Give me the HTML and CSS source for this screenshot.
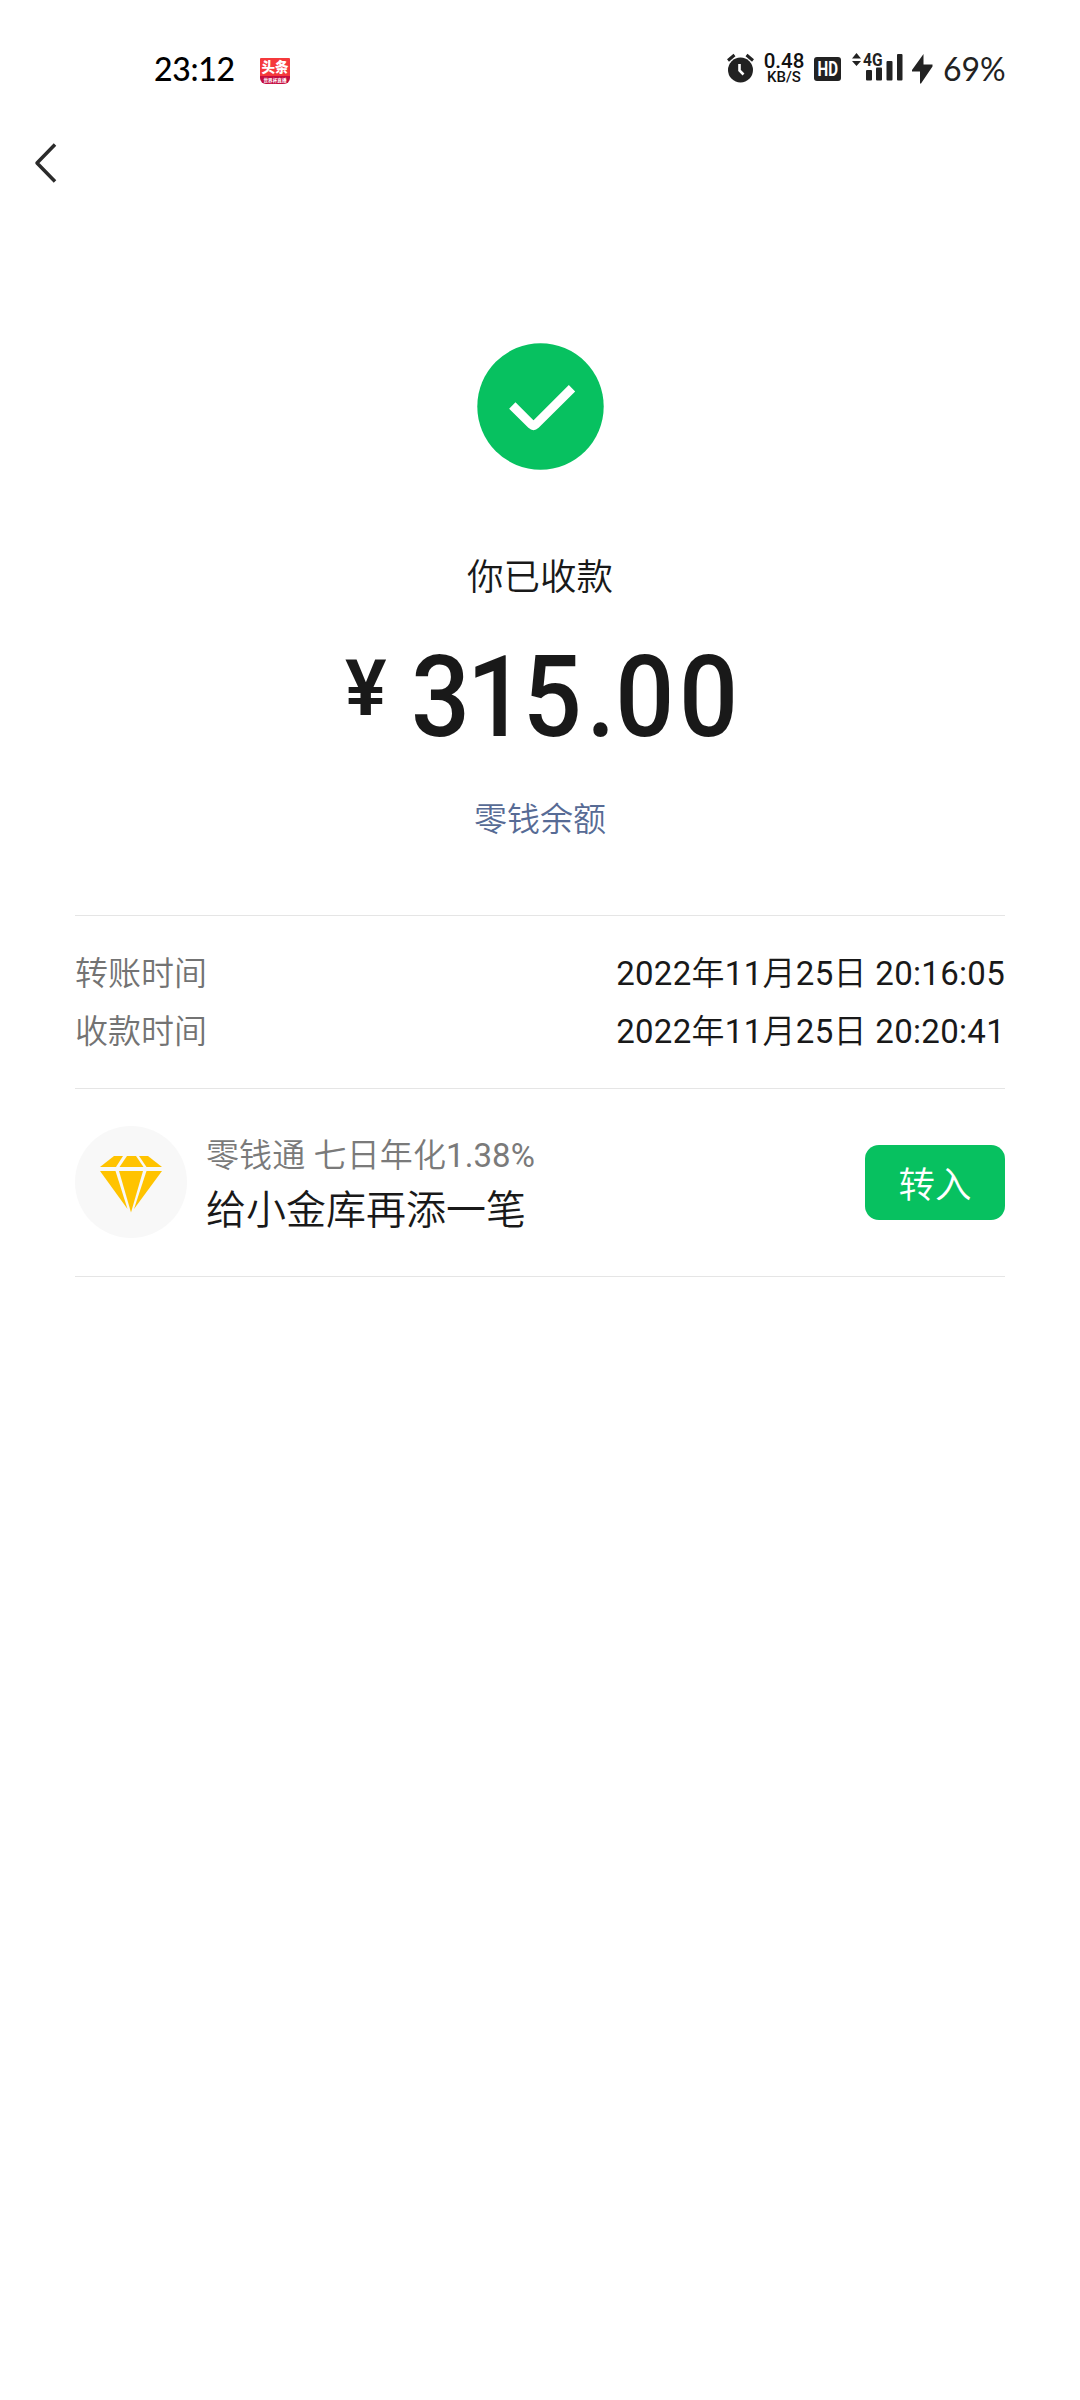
FILE: index.html
```
<!DOCTYPE html>
<html lang="zh-CN">
<head>
  <meta charset="UTF-8">
  <meta name="viewport" content="width=device-width, initial-scale=1.0">
  <title>收款详情</title>
  <link rel="stylesheet" href="styles.css">
</head>
<body>
  <!-- 状态栏 -->
  <header class="status-bar">
    <div class="status-left">
      <span class="clock">23:12</span>
      <div class="app-badge">
        <span class="app-name">头条</span>
        <span class="app-sub">世界杯直播</span>
      </div>
    </div>
    <div class="status-right">
      <svg class="alarm" width="27" height="30" viewBox="0 0 27 30">
        <circle cx="13.5" cy="17" r="12.5" fill="#222"/>
        <path d="M1 7.500L7.500 2M26 7.500L19.500 2" stroke="#222" stroke-width="3" fill="none"/>
        <path d="M12.500 11V17.500L16.500 21.500" stroke="#fff" stroke-width="2.600" fill="none"/>
      </svg>
      <div class="speed">
        <span class="speed-value">0.48</span>
        <span class="speed-unit">KB/S</span>
      </div>
      <svg class="hd" width="27" height="24" viewBox="0 0 27 24">
        <rect width="27" height="24" rx="3" fill="#222"/>
        <text x="3.500" y="19" textLength="20.500" lengthAdjust="spacingAndGlyphs" fill="#fff">HD</text>
      </svg>
      <div class="signal">
        <svg width="51" height="30" viewBox="0 0 51 30">
          <path d="M0 5.500L4.500 0L9 5.500zM0 8L4.500 13L9 8z" fill="#222"/>
          <rect x="14" y="17" width="6" height="10.500" rx="1" fill="#222"/>
          <rect x="24" y="14.500" width="6" height="13" rx="1" fill="#222"/>
          <rect x="34.500" y="8" width="6" height="19.500" rx="1" fill="#222"/>
          <rect x="45" y="1" width="5.500" height="26.500" rx="1" fill="#222"/>
          <text class="network" x="11" y="13" textLength="19.500" lengthAdjust="spacingAndGlyphs">4G</text>
        </svg>
      </div>
      <svg class="bolt" width="21" height="30" viewBox="0 0 21 30">
        <path d="M11.500 0V10.500H20.500V12.500L9 29.500H8V17.500H0V16z" fill="#222"/>
      </svg>
      <span class="battery">69%</span>
    </div>
  </header>

  <nav class="nav">
    <svg width="24" height="42" viewBox="0 0 24 42">
      <path d="M21 2.500L3 21L21 39.500" fill="none" stroke="#2b2b2b" stroke-width="3.500" stroke-linejoin="round"/>
    </svg>
  </nav>

  <main class="content">
    <section class="result">
      <svg class="success" width="127" height="127" viewBox="0 0 127 127">
        <circle cx="63.500" cy="63.500" r="63.200" fill="#07c160"/>
        <path d="M35.300 62.500L54.500 81.600Q56.500 83.500 58.500 81.600L95 45.200" fill="none" stroke="#fff" stroke-width="9"/>
      </svg>
      <p class="result-title">你已收款</p>
      <p class="amount"><span class="currency">¥</span><span class="number"><span class="tight">31</span>5<span class="dot">.</span>00</span></p>
      <a class="balance">零钱余额</a>
    </section>

    <section class="times">
      <div class="time-row">
        <span class="label">转账时间</span>
        <span class="value">2022年11月25日 20:16:05</span>
      </div>
      <div class="time-row">
        <span class="label">收款时间</span>
        <span class="value">2022年11月25日 20:20:41</span>
      </div>
    </section>

    <section class="promo">
      <div class="promo-icon">
        <svg width="64" height="58" viewBox="0 0 64 58">
          <g fill="#ffc300">
            <path d="M15 1H24L17 12H1z"/>
            <path d="M28 1H37L44.500 12H20.500z"/>
            <path d="M40 1H49L63 12H47.500z"/>
            <path d="M1 16H16.500L28.500 54z"/>
            <path d="M20 16H44L32 57.500z"/>
            <path d="M47.500 16H63L35 54z"/>
          </g>
        </svg>
      </div>
      <div class="promo-text">
        <p class="promo-rate">零钱通 七日年化1.38%</p>
        <p class="promo-title">给小金库再添一笔</p>
      </div>
      <button class="promo-btn">转入</button>
    </section>
  </main>
</body>
</html>
```

FILE: styles.css
```
* {
  margin: 0;
  padding: 0;
  box-sizing: border-box;
}

body {
  background-color: #fff;
  color: #191919;
  font-family: Roboto, "Noto Sans CJK SC DemiLight", "Noto Sans CJK SC", sans-serif;
  font-weight: 350;
  min-height: 2400px;
}

svg {
  display: block;
  flex-shrink: 0;
  overflow: visible;
}

/* 状态栏 */
.status-bar {
  display: flex;
  justify-content: space-between;
  height: 100px;
  padding: 53px 75px 0 154px;
  font-family: Lato, "Noto Sans CJK SC", sans-serif;
}

.status-left,
.status-right {
  display: flex;
  align-items: flex-start;
}

.clock {
  width: 106px;
  color: #000;
  font-size: 32px;
  font-weight: 500;
  line-height: 32px;
  letter-spacing: -0.3px;
}

.app-badge {
  display: flex;
  flex-direction: column;
  width: 30px;
  height: 26px;
  margin-top: 5px;
  overflow: hidden;
  border-radius: 1px 1px 6px 6px;
  background: linear-gradient(#f5393c 68%, #c40d3f 68%);
  color: #fff;
  text-align: center;
  white-space: nowrap;
}

.app-name {
  font-size: 13.5px;
  font-weight: 900;
  line-height: 19px;
}

.app-sub {
  font-size: 4.6px;
  font-weight: 700;
  line-height: 6px;
}

.alarm {
  margin-right: 9px;
}

.speed {
  display: flex;
  flex-direction: column;
  width: 42px;
  margin-right: 9px;
  color: #111;
  font-family: Roboto, sans-serif;
  font-weight: 500;
  text-align: center;
}

.speed-value {
  font-size: 20.5px;
  line-height: 16px;
}

.speed-unit {
  font-size: 15px;
  line-height: 17px;
}

.hd {
  margin: 4px 11px 0 0;
  font-family: Roboto, sans-serif;
  font-size: 19.5px;
  font-weight: 700;
}

.signal {
  margin-right: 9px;
}

/* 白色描边压在信号格上 */
.network {
  fill: #222;
  font-family: Roboto, sans-serif;
  font-size: 18px;
  font-weight: 700;
  stroke: #fff;
  stroke-width: 2px;
  paint-order: stroke;
}

.bolt {
  margin: 1px 10px 0 0;
}

.battery {
  width: 62px;
  color: #222;
  font-size: 32px;
  font-weight: 400;
  line-height: 31px;
  white-space: nowrap;
}

/* 返回 */
.nav {
  height: 120px;
  padding: 42px 0 0 34px;
}

.content {
  padding: 0 75px;
}

.result {
  display: flex;
  flex-direction: column;
  align-items: center;
  height: 696px;
  padding-top: 123px;
  border-bottom: 1px solid #e5e5e5;
}

.result-title {
  margin-top: 81px;
  font-size: 36.5px;
  line-height: 54px;
}

.amount {
  display: flex;
  align-items: flex-start;
  margin-top: 28px;
  height: 112px;
}

.currency {
  margin: 11px 24px 0 0;
  font-size: 78px;
  font-weight: 600;
  line-height: 90px;
}

/* 数字略微压窄 */
.number {
  margin-right: -36px;
  font-size: 113px;
  font-weight: 500;
  line-height: 130px;
  letter-spacing: 5px;
  transform: scaleX(0.92);
  transform-origin: left;
}

.tight {
  letter-spacing: -3.5px;
}

.dot {
  letter-spacing: 0;
}

.balance {
  margin-top: 51px;
  color: #576b95;
  font-size: 33px;
  line-height: 48px;
}

.times {
  height: 173px;
  padding-top: 29px;
  border-bottom: 1px solid #e5e5e5;
}

.time-row {
  display: flex;
  justify-content: space-between;
  height: 58px;
  font-size: 33px;
  line-height: 58px;
}

.label {
  color: #737373;
}

.value {
  font-weight: 400;
  letter-spacing: 0.3px;
}

/* 零钱通 */
.promo {
  display: flex;
  height: 188px;
  padding-top: 37px;
  border-bottom: 1px solid #e5e5e5;
}

.promo-icon {
  display: flex;
  align-items: center;
  justify-content: center;
  width: 112px;
  height: 112px;
  padding-top: 4px;
  border-radius: 50%;
  background-color: #f8f8f8;
}

.promo-text {
  flex: 1;
  padding: 2px 0 0 19px;
}

.promo-rate {
  color: #7a7a7a;
  font-size: 33px;
  font-weight: 400;
  line-height: 56px;
  letter-spacing: 0.1px;
}

.promo-title {
  font-size: 40px;
  line-height: 54px;
}

.promo-btn {
  width: 140px;
  height: 75px;
  margin-top: 19px;
  border: none;
  border-radius: 14px;
  background-color: #07c160;
  color: #fff;
  font-family: inherit;
  font-size: 36.5px;
  font-weight: inherit;
}
```
